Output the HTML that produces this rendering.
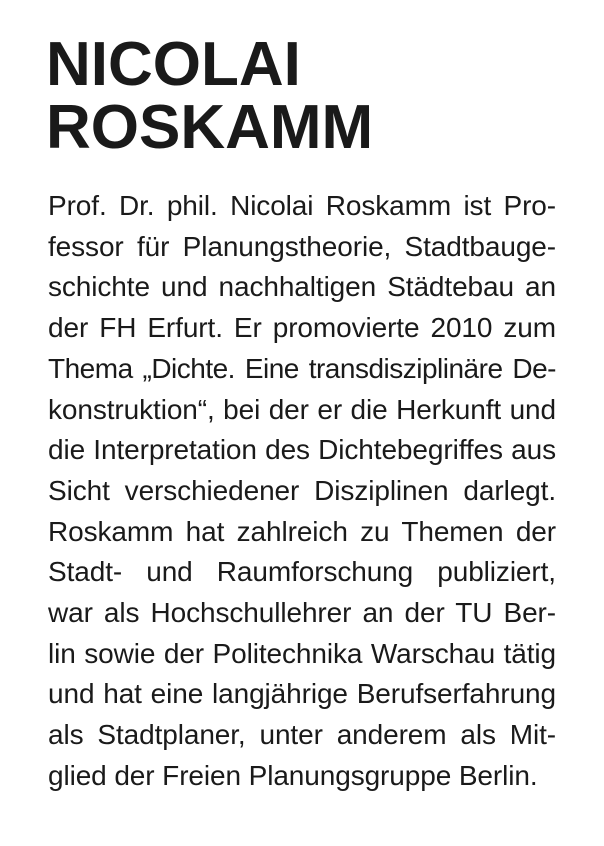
<!DOCTYPE html>
<html><head><meta charset="utf-8"><style>
html,body{margin:0;padding:0;background:#fff;}
body{width:604px;height:846px;overflow:hidden;position:relative;color:#1a1a1a;}
h1{position:absolute;left:46px;top:33px;margin:0;font:bold 62px/63px "Liberation Sans",sans-serif;letter-spacing:0px;}
.t{position:absolute;left:48px;top:186px;width:508px;font:28px/40.7px "Liberation Sans",sans-serif;letter-spacing:-0.1px;}
.t div{text-align:justify;text-align-last:justify;white-space:nowrap;}
.t div.l{text-align-last:left;}
.t div.n{letter-spacing:-0.5px;}
</style></head><body>
<h1>NICOLAI<br>ROSKAMM</h1>
<div class="t">
<div>Prof. Dr. phil. Nicolai Roskamm ist Pro-</div>
<div>fessor für Planungstheorie, Stadtbauge-</div>
<div>schichte und nachhaltigen Städtebau an</div>
<div>der FH Erfurt. Er promovierte 2010 zum</div>
<div class="n">Thema „Dichte. Eine transdisziplinäre De-</div>
<div>konstruktion“, bei der er die Herkunft und</div>
<div>die Interpretation des Dichtebegriffes aus</div>
<div>Sicht verschiedener Disziplinen darlegt.</div>
<div>Roskamm hat zahlreich zu Themen der</div>
<div>Stadt- und Raumforschung publiziert,</div>
<div>war als Hochschullehrer an der TU Ber-</div>
<div>lin sowie der Politechnika Warschau tätig</div>
<div>und hat eine langjährige Berufserfahrung</div>
<div>als Stadtplaner, unter anderem als Mit-</div>
<div class="l">glied der Freien Planungsgruppe Berlin.</div>
</div>
</body></html>
